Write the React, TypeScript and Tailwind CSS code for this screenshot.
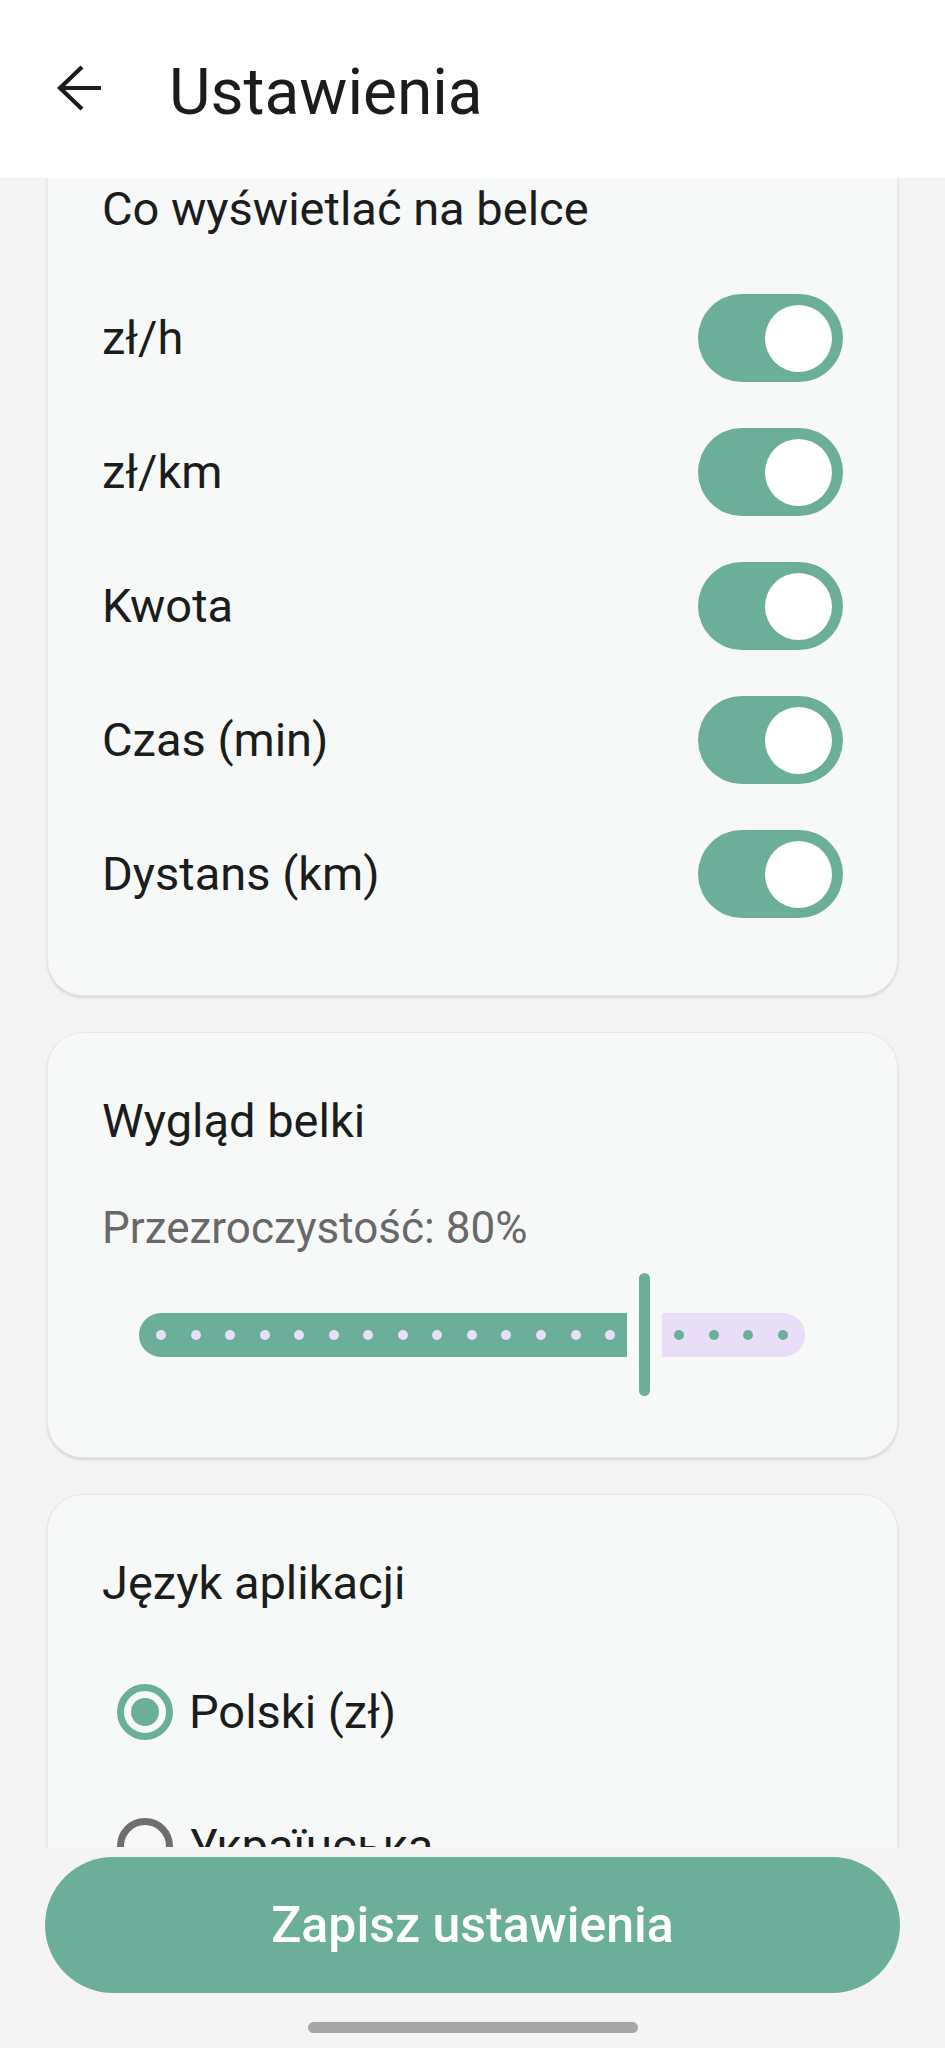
import React, { useState } from 'react';

// slider config: 10..100 step 5
const MIN = 10;
const MAX = 100;
const STEP = 5;
const TRACK_W = 666;
const EDGE = 22; // first/last tick inset
const HANDLE_W = 11;
const HANDLE_GAP = 12;
const DOT = 10;

const Toggle: React.FC<{ on: boolean; onChange: () => void }> = ({ on, onChange }) => (
  <button
    onClick={onChange}
    className={`w-[145px] h-[88px] rounded-full flex items-center px-[11px] ${on ? 'bg-[#6baf9a] justify-end' : 'bg-[#dcdcdc] justify-start'}`}
  >
    <span className="w-[67px] h-[67px] rounded-full bg-white" />
  </button>
);

const Radio: React.FC<{ checked: boolean }> = ({ checked }) => (
  <span
    className={`w-[56px] h-[56px] rounded-full border-[7px] flex items-center justify-center shrink-0 ${checked ? 'border-[#6baf9a]' : 'border-[#6e6e6e]'}`}
  >
    {checked && <span className="w-[28px] h-[28px] rounded-full bg-[#6baf9a]" />}
  </span>
);

const StepSlider: React.FC<{ value: number }> = ({ value }) => {
  const count = (MAX - MIN) / STEP + 1;
  const idx = Math.round((value - MIN) / STEP);
  const pitch = (TRACK_W - EDGE * 2) / (count - 1);
  const handleX = EDGE + idx * pitch;
  const activeW = handleX - HANDLE_W / 2 - HANDLE_GAP;
  const inactiveStart = handleX + HANDLE_W / 2 + HANDLE_GAP;
  const firstInactive = EDGE + (idx + 1) * pitch - inactiveStart - DOT / 2;

  return (
    <div className="h-[123px] flex items-center ml-[37px]" style={{ width: TRACK_W }}>
      <div
        className="h-[44px] bg-[#6baf9a] rounded-l-full rounded-r-[4px] flex items-center shrink-0"
        style={{ width: activeW, paddingLeft: EDGE - DOT / 2, gap: pitch - DOT }}
      >
        {Array.from({ length: idx }).map((_, i) => (
          <span key={i} className="w-[10px] h-[10px] rounded-full bg-[#e8def8] shrink-0" />
        ))}
      </div>
      <div className="h-[123px] w-[11px] rounded-full bg-[#6baf9a] shrink-0 mx-[12px]" />
      <div
        className="h-[44px] flex-1 bg-[#e8def8] rounded-r-full rounded-l-[4px] flex items-center"
        style={{ paddingLeft: firstInactive, gap: pitch - DOT }}
      >
        {Array.from({ length: count - 1 - idx }).map((_, i) => (
          <span key={i} className="w-[10px] h-[10px] rounded-full bg-[#6baf9a] shrink-0" />
        ))}
      </div>
    </div>
  );
};

const Card: React.FC<{ children: React.ReactNode; className?: string }> = ({ children, className }) => (
  <section
    className={`rounded-[36px] bg-[#f7f8f8] border border-[#e8e8e8] shadow-[0_2px_3px_rgba(0,0,0,0.13)] px-[54px] pt-[60px] ${className ?? ''}`}
  >
    {children}
  </section>
);

const App: React.FC = () => {
  const [bar, setBar] = useState({
    perHour: true,
    perKm: true,
    amount: true,
    time: true,
    distance: true,
  });
  const [opacity] = useState(80);
  const [lang, setLang] = useState('pl');

  const rows: { key: keyof typeof bar; label: string }[] = [
    { key: 'perHour', label: 'zł/h' },
    { key: 'perKm', label: 'zł/km' },
    { key: 'amount', label: 'Kwota' },
    { key: 'time', label: 'Czas (min)' },
    { key: 'distance', label: 'Dystans (km)' },
  ];

  const langs = [
    { id: 'pl', label: 'Polski (zł)' },
    { id: 'uk', label: 'Українська' },
  ];

  return (
    <div className="w-[945px] h-[2048px] flex flex-col bg-[#f4f4f4] text-[#1b1c1c] [font-family:Roboto,'Noto_Sans',sans-serif] overflow-hidden">
      {/* Top bar */}
      <header className="h-[178px] bg-white flex items-start shrink-0 z-10">
        <svg
          width="48"
          height="48"
          viewBox="0 0 48 48"
          className="ml-[55px] mt-[64px]"
          fill="none"
          stroke="#1b1c1c"
          strokeWidth="4.2"
        >
          <path d="M46 24H4" />
          <path d="M27 3L5 24l22 21" />
        </svg>
        <h1 className="ml-[66px] mt-[55px] text-[64px] leading-[75px] font-normal">Ustawienia</h1>
      </header>

      {/* Scrolled content */}
      <main className="flex-1 overflow-hidden">
        <div className="-mt-[58px] px-[47px] flex flex-col gap-[36px]">
          <Card className="pb-[54px]">
            <h2 className="text-[47px] leading-[56px]">Co wyświetlać na belce</h2>
            <div className="mt-[34px]">
              {rows.map((r) => (
                <div key={r.key} className="h-[134px] flex items-center justify-between">
                  <span className="text-[47px] leading-[56px]">{r.label}</span>
                  <Toggle on={bar[r.key]} onChange={() => setBar({ ...bar, [r.key]: !bar[r.key] })} />
                </div>
              ))}
            </div>
          </Card>

          <Card className="pb-[61px]">
            <h2 className="text-[47px] leading-[56px]">Wygląd belki</h2>
            <p className="mt-[53px] text-[44px] leading-[52px] text-[#686868]">Przezroczystość: {opacity}%</p>
            <div className="mt-[19px]">
              <StepSlider value={opacity} />
            </div>
          </Card>

          <Card className="pb-[54px]">
            <h2 className="text-[47px] leading-[56px]">Język aplikacji</h2>
            <div className="mt-[34px]">
              {langs.map((l) => (
                <div
                  key={l.id}
                  onClick={() => setLang(l.id)}
                  className="h-[134px] flex items-center pl-[15px] gap-[16px]"
                >
                  <Radio checked={lang === l.id} />
                  <span className="text-[47px] leading-[56px]">{l.label}</span>
                </div>
              ))}
            </div>
          </Card>
        </div>
      </main>

      {/* Bottom action */}
      <footer className="h-[201px] shrink-0 flex flex-col items-center bg-[#f4f4f4]">
        <button className="mt-[10px] w-[855px] h-[136px] rounded-full bg-[#6baf9a] text-white text-[50px] font-medium">
          Zapisz ustawienia
        </button>
        <div className="mt-[29px] w-[330px] h-[11px] rounded-full bg-[#a6a6a6]" />
      </footer>
    </div>
  );
};

export default App;
